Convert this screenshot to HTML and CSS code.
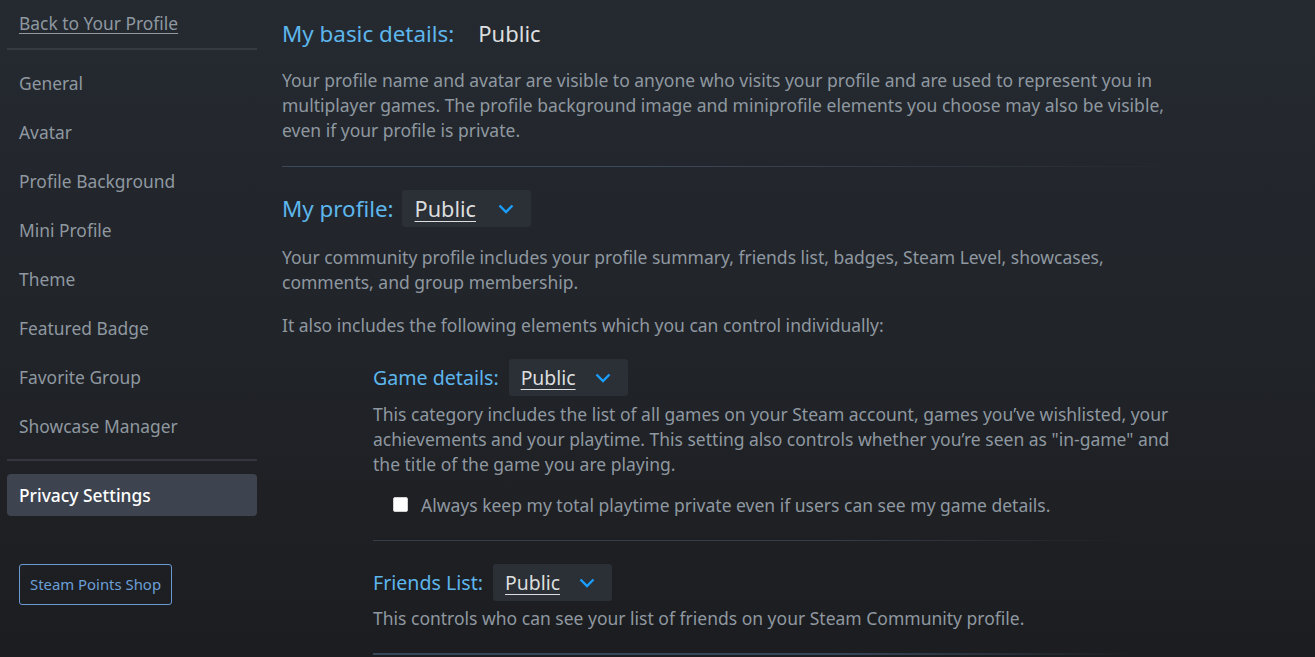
FILE: index.html
```html
<!DOCTYPE html>
<html>
<head>
<meta charset="utf-8">
<link rel="stylesheet" href="styles.css">
</head>
<body>
<div class="page">
  <aside class="sidebar">
    <a class="back" href="#">Back to Your Profile</a>
    <div class="sep"></div>
    <nav class="nav">
      <div class="nav-item">General</div>
      <div class="nav-item">Avatar</div>
      <div class="nav-item">Profile Background</div>
      <div class="nav-item">Mini Profile</div>
      <div class="nav-item">Theme</div>
      <div class="nav-item">Featured Badge</div>
      <div class="nav-item">Favorite Group</div>
      <div class="nav-item">Showcase Manager</div>
    </nav>
    <div class="sep sep-low"></div>
    <div class="nav-item active">Privacy Settings</div>
    <a class="points-btn" href="#">Steam Points Shop</a>
  </aside>

  <main class="main">
    <div class="title-row basic">
      <span class="title">My basic details:</span>
      <span class="static-val">Public</span>
    </div>
    <p class="desc">Your profile name and avatar are visible to anyone who visits your profile and are used to represent you in multiplayer games. The profile background image and miniprofile elements you choose may also be visible, even if your profile is private.</p>
    <div class="hr"></div>

    <div class="title-row">
      <span class="title">My profile:</span>
      <div class="dropdown">
        <span class="dd-val">Public</span>
        <svg class="chev" width="16" height="10" viewBox="0 0 16 10"><path d="M1.5 1.5 L8 8 L14.5 1.5" fill="none" stroke="#1a9fff" stroke-width="2.4"/></svg>
      </div>
    </div>
    <p class="desc d2">Your community profile includes your profile summary, friends list, badges, Steam Level, showcases, comments, and group membership.</p>
    <p class="desc d3">It also includes the following elements which you can control individually:</p>

    <section class="sub">
      <div class="title-row sub-row">
        <span class="title sub-title">Game details:</span>
        <div class="dropdown sm">
          <span class="dd-val">Public</span>
          <svg class="chev" width="16" height="10" viewBox="0 0 16 10"><path d="M1.5 1.5 L8 8 L14.5 1.5" fill="none" stroke="#1a9fff" stroke-width="2.4"/></svg>
        </div>
      </div>
      <p class="desc sub-desc">This category includes the list of all games on your Steam account, games you’ve wishlisted, your achievements and your playtime. This setting also controls whether you’re seen as "in-game" and the title of the game you are playing.</p>
      <label class="check-row"><span class="box"></span>Always keep my total playtime private even if users can see my game details.</label>
      <div class="hr sub-hr"></div>

      <div class="title-row sub-row fl-row">
        <span class="title sub-title">Friends List:</span>
        <div class="dropdown sm">
          <span class="dd-val">Public</span>
          <svg class="chev" width="16" height="10" viewBox="0 0 16 10"><path d="M1.5 1.5 L8 8 L14.5 1.5" fill="none" stroke="#1a9fff" stroke-width="2.4"/></svg>
        </div>
      </div>
      <p class="desc sub-desc fl">This controls who can see your list of friends on your Steam Community profile.</p>
      <div class="hr sub-hr blue"></div>
    </section>
  </main>
</div>
</body>
</html>
```

FILE: styles.css
```css
html, body {
  margin: 0;
  padding: 0;
  height: 100%;
}
body {
  background: linear-gradient(to bottom, #252a31 0%, #212429 50%, #1c1d20 100%);
  font-family: "Noto Sans", "Open Sans", sans-serif;
  color: #8f98a0;
  overflow: hidden;
}
.page {
  display: flex;
  align-items: flex-start;
  height: 657px;
}
.sidebar {
  width: 250px;
  margin-left: 7px;
  display: flex;
  flex-direction: column;
  flex-shrink: 0;
}
.back {
  display: block;
  height: 48px;
  line-height: 46px;
  padding-left: 12px;
  color: #8f98a0;
  font-size: 17.4px;
  text-decoration: underline;
  text-underline-offset: 3px;
}
.sep {
  height: 2px;
  background: #363a41;
}
.nav {
  padding-top: 9px;
}
.nav-item {
  height: 49px;
  line-height: 49px;
  padding-left: 12px;
  font-size: 17.4px;
  color: #8f98a0;
}
.sep-low {
  margin-top: 8px;
  background: #33363c;
}
.nav-item.active {
  margin-top: 13px;
  height: 42px;
  line-height: 42px;
  background: #3d4450;
  border-radius: 4px;
  color: #ffffff;
  font-weight: 500;
}
.points-btn {
  display: block;
  align-self: flex-start;
  margin: 48px 0 0 12px;
  width: 151px;
  height: 39px;
  line-height: 39px;
  text-align: center;
  border: 1px solid #6a9ad2;
  border-radius: 3px;
  color: #6b9fd8;
  font-size: 14.9px;
  text-decoration: none;
}
.main {
  margin-left: 25px;
  width: 900px;
  padding-top: 18px;
}
.title-row {
  display: flex;
  align-items: center;
  height: 37px;
}
.title-row.basic {
  height: 30px;
}
.title {
  color: #5db6ec;
  font-size: 22.4px;
  margin-right: 8px;
}
.basic .title {
  margin-right: 24px;
}
.static-val {
  color: #dcdedf;
  font-size: 22px;
}
.dropdown {
  display: flex;
  align-items: center;
  height: 37px;
  padding: 0 17px 0 13px;
  background: #2b2f36;
  border-radius: 3px;
}
.dd-val {
  color: #dcdedf;
  font-size: 21.7px;
  text-decoration: underline;
  text-underline-offset: 4px;
  text-decoration-thickness: 1px;
  margin-right: 22px;
}
.chev {
  display: block;
}
.desc {
  margin: 0;
  font-size: 17.5px;
  line-height: 25px;
  color: #8f98a0;
}
.basic + .desc {
  margin-top: 20px;
}
.hr {
  height: 1px;
  margin-top: 23px;
  margin-bottom: 23px;
  background: linear-gradient(to right, #3b4a5a 0%, #3b4a5a 40%, rgba(59, 74, 90, 0) 100%);
}
.d2 {
  margin-top: 18px;
}
.d3 {
  margin-top: 18px;
}
.sub {
  margin-left: 91px;
  width: 805px;
  margin-top: 21px;
}
.sub-title {
  font-size: 19.6px;
  margin-right: 10px;
}
.dropdown.sm {
  padding: 0 17px 0 12px;
}
.sm .dd-val {
  font-size: 19.4px;
  margin-right: 19px;
}
.sub-desc {
  margin-top: 6px;
}
.sub-desc.fl {
  margin-top: 5px;
}
.check-row {
  display: flex;
  align-items: center;
  height: 25px;
  margin-top: 15px;
  padding-left: 20px;
  font-size: 17.5px;
  color: #8f98a0;
}
.box {
  width: 13px;
  height: 13px;
  background: #ffffff;
  border: 1px solid #d0d0d0;
  border-radius: 2px;
  margin-right: 13px;
}
.sub-hr {
  margin-top: 23px;
  margin-bottom: 23px;
  width: 760px;
  background: linear-gradient(to right, #363d47 0%, #363d47 60%, rgba(54, 61, 71, 0) 100%);
}
.sub-hr.blue {
  height: 2px;
  margin-top: 22px;
  background: linear-gradient(to right, #37475a 0%, #37475a 60%, rgba(55, 71, 90, 0) 100%);
}
```
